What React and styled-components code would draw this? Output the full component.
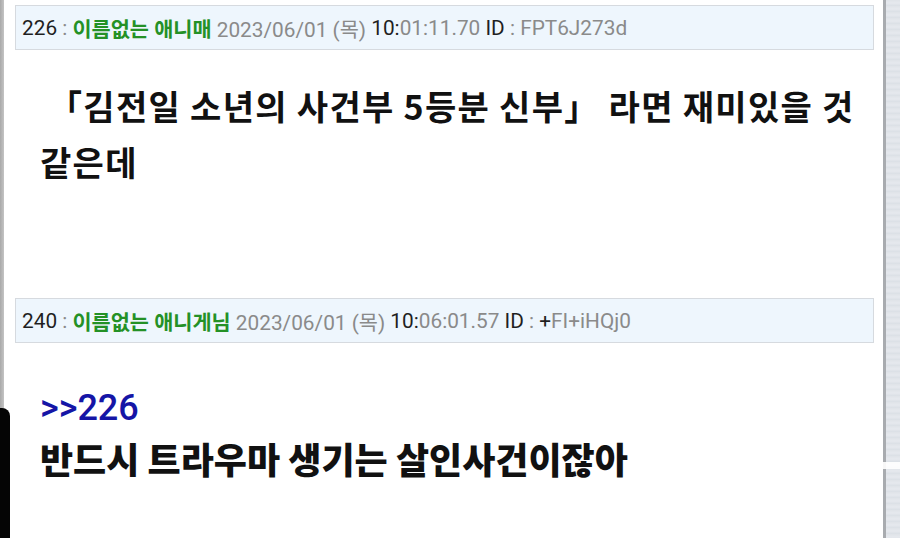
import React from "react";
import styled, { createGlobalStyle } from "styled-components";

const Global = createGlobalStyle`
  html, body { margin: 0; padding: 0; background: #fff; }
  body { font-family: Roboto, "Noto Sans CJK KR", "Noto Sans", sans-serif; }
`;

const Page = styled.div`
  position: relative;
  display: flex;
  width: 900px;
  height: 538px;
  overflow: hidden;
  background: #fff;
`;

const LeftRail = styled.div`
  width: 4px;
  flex: none;
  background: linear-gradient(90deg, #a9a9a9, #c4c4c4);
`;

const Thread = styled.main`
  flex: 1;
  padding: 5px 9px 0 11px;
  display: flex;
  flex-direction: column;
`;

const RightRail = styled.div`
  width: 14px;
  flex: none;
  border-left: 3px solid #a8abaf;
  background: repeating-linear-gradient(
    180deg,
    #dfe3e8 0px,
    #e6e9ee 3px,
    #dadfe5 6px
  );
`;

const Post = styled.article`
  display: flex;
  flex-direction: column;
`;

const Header = styled.div`
  height: 45px;
  box-sizing: border-box;
  border: 1px solid #d6dadf;
  background: #eef6fd;
  display: flex;
  align-items: center;
  padding: 0 6px;
  font-size: 20.8px;
  color: #8a8a8a;
  white-space: nowrap;
`;

const Dark = styled.span`
  color: #1f1f1f;
`;

const Name = styled.span`
  color: #249126;
  font-weight: 700;
`;

const Body = styled.div`
  padding: ${(p) => p.$pad} 8px 0 25px;
  min-height: ${(p) => p.$min};
  box-sizing: border-box;
  font-family: "Noto Sans CJK KR", Roboto, sans-serif;
  font-weight: 700;
  color: #111;
`;

const Line = styled.div`
  font-size: ${(p) => p.$size}px;
  line-height: ${(p) => p.$lh}px;
  color: ${(p) => p.$color || "#111"};
  font-weight: ${(p) => p.$weight || 700};
  letter-spacing: ${(p) => p.$ls || "0"};
  text-indent: ${(p) => p.$indent || "0"};
`;

const Quote = styled.span`
  font-family: Roboto, "Noto Sans CJK KR", sans-serif;
  font-weight: 500;
`;

const SideTab = styled.div`
  position: absolute;
  left: 0;
  top: 408px;
  width: 10px;
  bottom: 0;
  background: #050505;
  border-top-right-radius: 8px;
`;

const RailNotch = styled.div`
  position: absolute;
  right: 0;
  top: 462px;
  width: 34px;
  height: 7px;
  background: #fff;
  border-radius: 2px 0 0 2px;
  opacity: 0.9;
`;

function PostHeader({ no, name, date, time, id }) {
  const [hh, rest] = time;
  const [idHead, idTail] = id;
  return (
    <Header>
      <Dark>{no}</Dark>&nbsp;:&nbsp;<Name>{name}</Name>&nbsp;{date}&nbsp;
      <Dark>{hh}</Dark>
      {rest}&nbsp;<Dark>ID</Dark>&nbsp;:&nbsp;<Dark>{idHead}</Dark>
      {idTail}
    </Header>
  );
}

export default function App() {
  return (
    <>
      <Global />
      <Page>
        <LeftRail />
        <Thread>
          <Post>
            <PostHeader
              no="226"
              name="이름없는 애니매"
              date="2023/06/01 (목)"
              time={["10:", "01:11.70"]}
              id={["", "FPT6J273d"]}
            />
            <Body $pad="28px" $min="248px">
              <Line $size={34} $lh={56} $ls="1.3px" $indent="8px">
                「김전일 소년의 사건부 5등분 신부」 라면 재미있을 것 같은데
              </Line>
            </Body>
          </Post>
          <Post>
            <PostHeader
              no="240"
              name="이름없는 애니게님"
              date="2023/06/01 (목)"
              time={["10:", "06:01.57"]}
              id={["+", "FI+iHQj0"]}
            />
            <Body $pad="36px" $min="200px">
              <Line $size={36} $lh={50} $color="#1515a6">
                <Quote>&gt;&gt;226</Quote>
              </Line>
              <Line $size={36} $lh={50} $weight={900}>
                반드시 트라우마 생기는 살인사건이잖아
              </Line>
            </Body>
          </Post>
        </Thread>
        <RightRail />
        <SideTab />
        <RailNotch />
      </Page>
    </>
  );
}
